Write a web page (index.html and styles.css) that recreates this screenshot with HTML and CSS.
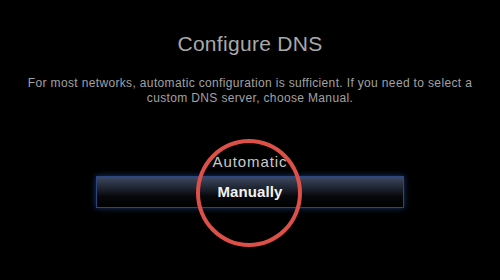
FILE: index.html
```html
<!DOCTYPE html>
<html>
<head>
<meta charset="utf-8">
<link rel="stylesheet" href="styles.css">
</head>
<body>
<main class="screen">
  <h1 class="title">Configure DNS</h1>
  <p class="desc">For most networks, automatic configuration is sufficient. If you need to select a custom DNS server, choose Manual.</p>
  <div class="options">
    <div class="option">Automatic</div>
    <div class="option selected">Manually</div>
    <div class="ring"></div>
  </div>
</main>
</body>
</html>
```
FILE: styles.css
```css
html, body {
  margin: 0;
  padding: 0;
  background: #000;
  width: 500px;
  height: 280px;
  overflow: hidden;
}
.screen {
  display: flex;
  flex-direction: column;
  align-items: center;
  padding-top: 32px;
  font-family: "Liberation Sans", Arial, sans-serif;
}
.title {
  margin: 0;
  font-size: 21px;
  line-height: 24px;
  font-weight: normal;
  letter-spacing: 0.3px;
  color: #a9a9a9;
}
.desc {
  margin: 20px 0 0;
  width: 456px;
  text-align: center;
  font-size: 12px;
  line-height: 14.5px;
  letter-spacing: 0.35px;
  color: #a2a2a2;
}
.options {
  position: relative;
  margin-top: 49px;
  display: flex;
  flex-direction: column;
  align-items: center;
  gap: 6px;
}
.option {
  font-size: 15px;
  line-height: 16px;
  letter-spacing: 0.9px;
  color: #cacaca;
}
.option.selected {
  width: 306px;
  height: 30px;
  line-height: 30px;
  text-align: center;
  font-size: 15px;
  font-weight: bold;
  letter-spacing: 0.1px;
  color: #f2f2f2;
  border: 1px solid #2b4680;
  background: linear-gradient(to bottom, #3e4961 0%, #242b3a 30%, #07080b 65%, #000 100%);
  box-shadow: 0 0 6px rgba(50, 100, 200, 0.55);
}
.ring {
  position: absolute;
  left: 100px;
  top: -15px;
  width: 98px;
  height: 100px;
  border: 4px solid #dd5048;
  border-radius: 50%;
}
```
